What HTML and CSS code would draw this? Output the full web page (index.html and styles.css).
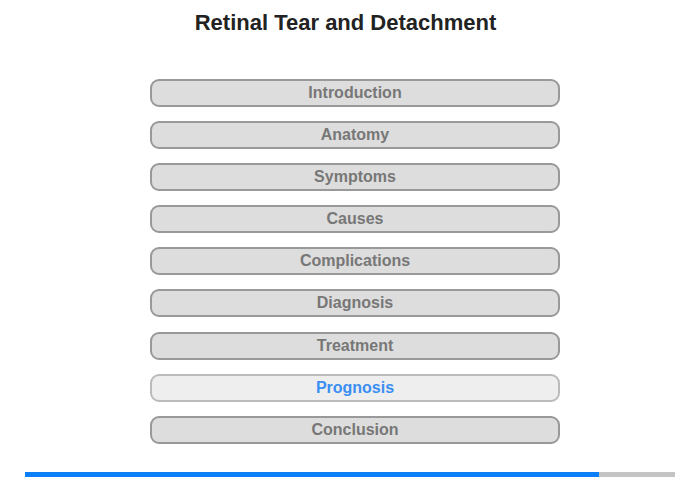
FILE: index.html
```html
<!DOCTYPE html>
<html>
<head>
<meta charset="utf-8">
<link rel="stylesheet" href="styles.css">
</head>
<body>
<div class="page">
  <h1 class="title">Retinal Tear and Detachment</h1>
  <nav class="menu">
    <div class="item">Introduction</div>
    <div class="item">Anatomy</div>
    <div class="item">Symptoms</div>
    <div class="item">Causes</div>
    <div class="item">Complications</div>
    <div class="item">Diagnosis</div>
    <div class="item">Treatment</div>
    <div class="item active">Prognosis</div>
    <div class="item">Conclusion</div>
  </nav>
  <div class="progress"><div class="fill" style="width: 88.3%"></div></div>
</div>
</body>
</html>
```
FILE: styles.css
```css
html, body {
  margin: 0;
  padding: 0;
  background: #fff;
}
body {
  font-family: "Liberation Sans", Arial, sans-serif;
  width: 700px;
  height: 480px;
  overflow: hidden;
}
.page {
  display: flex;
  flex-direction: column;
}
.title {
  margin: 0;
  padding-top: 10px;
  width: 691px;
  text-align: center;
  font-size: 22px;
  line-height: 26px;
  font-weight: bold;
  color: #222;
}
.menu {
  display: flex;
  flex-direction: column;
  gap: 14.1px;
  margin-top: 43px;
  margin-left: 150px;
  width: 410px;
}
.item {
  box-sizing: border-box;
  height: 28px;
  border: 2px solid #999;
  border-radius: 9px;
  background: #ddd;
  color: #777;
  font-size: 16px;
  font-weight: bold;
  line-height: 24px;
  text-align: center;
}
.item.active {
  background: #eee;
  border-color: #bbb;
  color: #3b8ef2;
}
.progress {
  margin-top: 28px;
  margin-left: 25px;
  width: 650px;
  height: 5px;
  background: #c4c4c4;
}
.fill {
  height: 100%;
  background: #0a7ff7;
}
```
